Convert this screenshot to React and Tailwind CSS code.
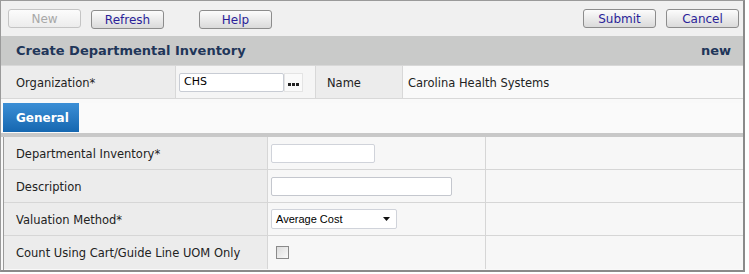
import React from 'react';

const FONT = { fontFamily: '"DejaVu Sans", Verdana, sans-serif' };

const ToolButton = ({ label, disabled }) => (
  <button
    className={`w-[73px] h-[19px] rounded-[3px] border text-[12px] leading-none bg-gradient-to-b from-[#fcfcfc] to-[#dadada] ${
      disabled ? 'border-[#c4c4c4] text-[#a8a8a8] from-[#f6f6f6] to-[#ececec]' : 'border-[#8c8c8c] text-[#2b1f99]'
    }`}
  >
    {label}
  </button>
);

const FormRow = ({ label, children, last }) => (
  <div className={`grid grid-cols-[264px_218px_1fr] h-[33px] ${last ? '' : 'border-b border-[#d6d6d6]'}`}>
    <div className="bg-[#ececec] border-r border-[#d6d6d6] flex items-center pl-[12px] pt-[3px] text-[11.5px] text-[#222]">
      {label}
    </div>
    <div className="bg-[#f7f7f7] border-r border-[#d6d6d6] flex items-center pl-[3px]">{children}</div>
    <div className="bg-[#f7f7f7]" />
  </div>
);

export default function App() {
  return (
    <div className="w-[749px] h-[274px] bg-white" style={FONT}>
      <div className="w-[745px] h-[272px] border-l border-t border-r-2 border-b-2 border-l-[#9a9a9a] border-t-[#9a9a9a] border-r-[#8a8a8a] border-b-[#8a8a8a] bg-[#f9f9f9] flex flex-col">
        {/* toolbar */}
        <div className="h-[35px] bg-[#f0f0f0] flex items-center pl-[7px] pr-[4px]">
          <ToolButton label="New" disabled />
          <div className="ml-[10px]">
            <ToolButton label="Refresh" />
          </div>
          <div className="ml-[35px]">
            <ToolButton label="Help" />
          </div>
          <div className="ml-auto flex gap-[10px]">
            <ToolButton label="Submit" />
            <ToolButton label="Cancel" />
          </div>
        </div>

        {/* header */}
        <div className="h-[29px] bg-[#c9cac9] flex items-center justify-between pl-[15px] pr-[12px] pt-[1px] text-[13px] font-bold text-[#1f3659]">
          <span>Create Departmental Inventory</span>
          <span>new</span>
        </div>

        {/* organization row */}
        <div className="grid grid-cols-[175px_140px_87px_1fr] h-[34px] border-t border-b border-[#d8d8d8] text-[11.5px] text-[#222]">
          <div className="bg-[#ececec] border-r border-[#d8d8d8] flex items-center pl-[15px] pt-[3px]">Organization*</div>
          <div className="bg-[#f5f5f5] border-r border-[#d8d8d8] flex items-center pl-[3px]">
            <div className="w-[105px] h-[19px] bg-white border border-[#c8ccd4] rounded-[2px] flex items-center pl-[4px] text-[11px] text-black">
              CHS
            </div>
            <div className="w-[19px] h-[19px] bg-[#fafafa] border border-[#e4e4e4] flex items-end justify-center pb-[5px] gap-[1px]">
              <span className="w-[3px] h-[3px] bg-[#222]" />
              <span className="w-[3px] h-[3px] bg-[#222]" />
              <span className="w-[3px] h-[3px] bg-[#222]" />
            </div>
          </div>
          <div className="bg-[#ececec] border-r border-[#d8d8d8] flex items-center pl-[11px] pt-[3px]">Name</div>
          <div className="bg-[#f9f9f9] flex items-center pl-[5px] pt-[3px]">Carolina Health Systems</div>
        </div>

        {/* tab row */}
        <div className="mt-[4px] h-[30px] pl-[2px] bg-[#fafafa] flex">
          <div className="w-[76px] h-[29px] bg-gradient-to-b from-[#3b8fd6] to-[#1567b0] text-white font-bold text-[12px] flex items-center pl-[13px]">
            General
          </div>
        </div>
        <div className="h-[4px] bg-[#c8c8c8]" />

        {/* form */}
        <div className="flex-1 border-l border-[#9a9a9a] ml-[2px] flex flex-col">
          <FormRow label="Departmental Inventory*">
            <div className="w-[104px] h-[19px] bg-white border border-[#d0d3da] rounded-[2px]" />
          </FormRow>
          <FormRow label="Description">
            <div className="w-[181px] h-[19px] bg-white border border-[#c4c7ce] rounded-[2px]" />
          </FormRow>
          <FormRow label="Valuation Method*">
            <div
              className="w-[126px] h-[20px] bg-white border border-[#d0d3da] rounded-[2px] flex items-center justify-between pl-[4px] pr-[6px] text-[11px] text-black"
              style={{ fontFamily: '"Liberation Sans", Arial, sans-serif' }}
            >
              <span>Average Cost</span>
              <svg width="7" height="4" viewBox="0 0 7 4">
                <path d="M0 0H7L3.5 4Z" fill="#111" />
              </svg>
            </div>
          </FormRow>
          <FormRow label="Count Using Cart/Guide Line UOM Only" last>
            <div className="ml-[5px] w-[13px] h-[13px] border border-[#8a8a8a] bg-gradient-to-br from-[#dcdcdc] to-[#fafafa]" />
          </FormRow>
        </div>
      </div>
    </div>
  );
}
